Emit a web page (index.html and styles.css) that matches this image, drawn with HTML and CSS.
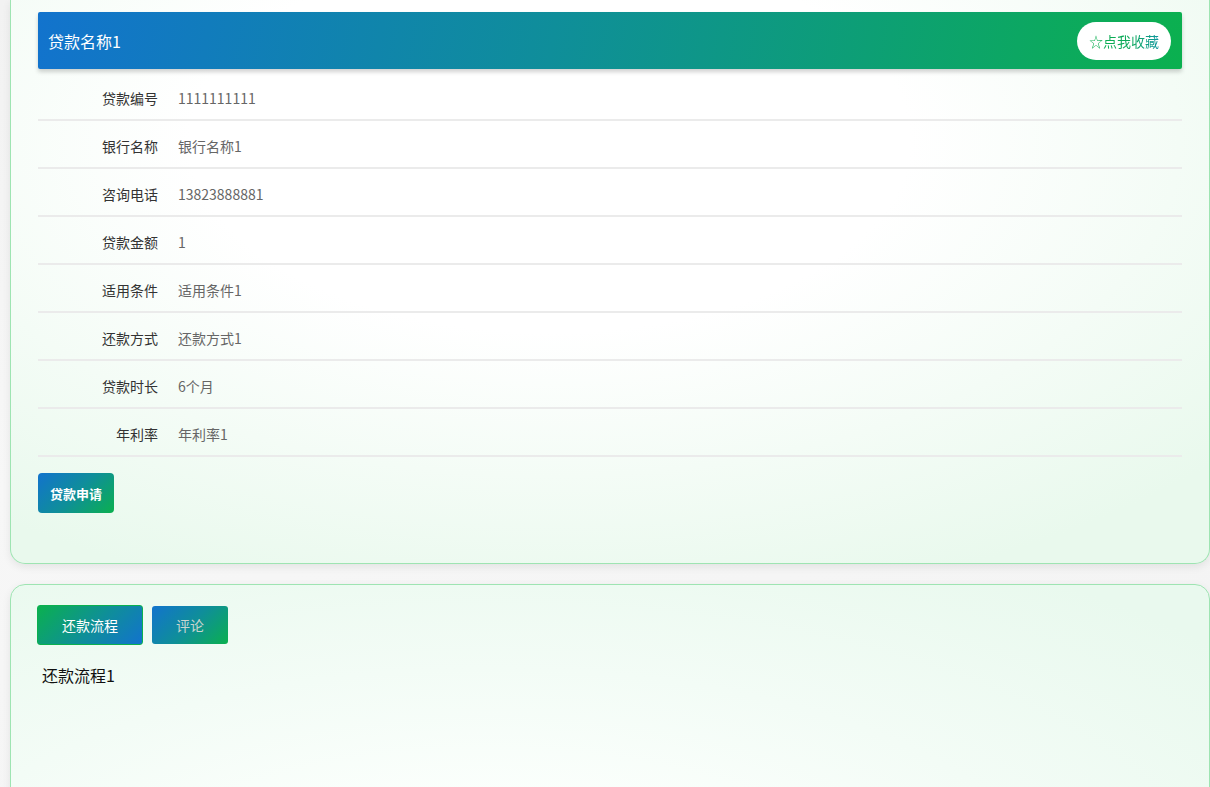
FILE: index.html
```html
<!DOCTYPE html>
<html lang="zh-CN">
<head>
<meta charset="utf-8">
<title>贷款详情</title>
<link rel="stylesheet" href="styles.css">
</head>
<body>
<div class="page">
  <section class="panel panel-top">
    <div class="title-bar">
      <span class="title">贷款名称1</span>
      <button class="collect"><span class="collect-text">☆点我收藏</span></button>
    </div>
    <div class="rows">
      <div class="row"><span class="label">贷款编号</span><span class="value">1111111111</span></div>
      <div class="row"><span class="label">银行名称</span><span class="value">银行名称1</span></div>
      <div class="row"><span class="label">咨询电话</span><span class="value">13823888881</span></div>
      <div class="row"><span class="label">贷款金额</span><span class="value">1</span></div>
      <div class="row"><span class="label">适用条件</span><span class="value">适用条件1</span></div>
      <div class="row"><span class="label">还款方式</span><span class="value">还款方式1</span></div>
      <div class="row"><span class="label">贷款时长</span><span class="value">6个月</span></div>
      <div class="row"><span class="label">年利率</span><span class="value">年利率1</span></div>
    </div>
    <button class="apply">贷款申请</button>
  </section>
  <section class="panel panel-bottom">
    <div class="tabs">
      <button class="tab tab-active">还款流程</button>
      <button class="tab tab-idle">评论</button>
    </div>
    <div class="tab-content">还款流程1</div>
  </section>
</div>
</body>
</html>
```

FILE: styles.css
```css
html, body {
  margin: 0;
  padding: 0;
}
body {
  background: linear-gradient(160deg, #f2f2f2 0%, #f7f7f7 40%, #f3f3f3 100%);
  font-family: "Microsoft YaHei", "Noto Sans CJK SC", "Noto Sans", sans-serif;
  overflow: hidden;
  height: 787px;
}
.page {
  padding: 0 0 0 10px;
  width: 1200px;
}
.panel {
  border: 1px solid #9ee4b2;
  border-radius: 15px;
  box-shadow: 0 3px 8px rgba(0, 0, 0, 0.08);
  box-sizing: border-box;
}
.panel-top {
  border-top: none;
  border-radius: 0 0 15px 15px;
  padding: 12px 27px 50px 27px;
  background: radial-gradient(ellipse 75% 85% at 45% 25%, #ffffff 40%, #f4fcf6 70%, #e9f9ed 100%);
}
.title-bar {
  height: 57px;
  display: flex;
  align-items: center;
  justify-content: space-between;
  padding: 0 11px 0 10px;
  background: linear-gradient(100deg, #1273cd 0%, #0f8e9a 45%, #0bb04f 100%);
  border-radius: 2px;
  box-shadow: 0 3px 4px rgba(0, 0, 0, 0.18);
  margin-bottom: 4px;
}
.title {
  color: #fff;
  font-size: 16px;
}
.collect {
  height: 38px;
  width: 94px;
  padding: 0;
  border: none;
  border-radius: 19px;
  background: #fff;
  font-family: inherit;
  font-size: 14px;
  display: flex;
  align-items: center;
  justify-content: center;
}
.collect-text {
  background: linear-gradient(90deg, #0bb04f, #0ba85a 60%, #1197a0);
  -webkit-background-clip: text;
  background-clip: text;
  color: transparent;
  line-height: 20px;
}
.rows {
  display: flex;
  flex-direction: column;
}
.row {
  display: flex;
  align-items: center;
  padding: 12px 0 8px;
  line-height: 26px;
  border-bottom: 2px solid #ebebeb;
  font-size: 14px;
}
.label {
  width: 120px;
  text-align: right;
  color: #333;
  flex-shrink: 0;
}
.value {
  margin-left: 20px;
  color: #666;
}
.apply {
  margin-top: 16px;
  width: 76px;
  height: 40px;
  border: none;
  border-radius: 4px;
  background: linear-gradient(135deg, #1273cd 0%, #0f8e9a 50%, #0bb04f 100%);
  color: #fff;
  font-family: inherit;
  font-size: 13px;
  font-weight: bold;
  padding: 0;
  display: block;
}
.panel-bottom {
  margin-top: 20px;
  height: 560px;
  padding: 20px 26px 0 26px;
  background: radial-gradient(ellipse 80% 75% at 40% 60%, #fbfffc 30%, #f3fcf6 60%, #e9f9ee 100%);
}
.tabs {
  display: flex;
  align-items: center;
  gap: 9px;
}
.tab {
  border-radius: 3px;
  font-family: inherit;
  font-size: 14px;
  padding: 0;
}
.tab-active {
  width: 106px;
  height: 40px;
  border: 1px solid #0bb04f;
  background: linear-gradient(135deg, #0bb04f 0%, #0f8e9a 55%, #1273cd 100%);
  color: #fff;
}
.tab-idle {
  width: 76px;
  height: 38px;
  border: none;
  background: linear-gradient(135deg, #1273cd 0%, #0f8e9a 50%, #0bb04f 100%);
  color: #c9d6d0;
}
.tab-content {
  margin-top: 18px;
  padding-left: 5px;
  font-size: 16px;
  line-height: 24px;
  color: #111;
}
```
